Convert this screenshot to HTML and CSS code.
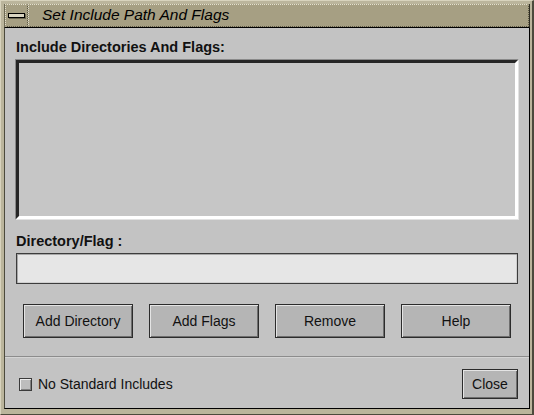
FILE: index.html
```html
<!DOCTYPE html>
<html>
<head>
<meta charset="utf-8">
<link rel="stylesheet" href="styles.css">
</head>
<body>
<div class="frame">
  <div class="titlebar">
    <div class="menu-btn"><span class="menu-bar"></span></div>
    <div class="title">Set Include Path And Flags</div>
  </div>
  <div class="content">
    <div class="label label-first">Include Directories And Flags:</div>
    <div class="listbox"><div class="listbox-inner"></div></div>
    <div class="label label-second">Directory/Flag :</div>
    <div class="textfield"></div>
    <div class="buttons">
      <div class="btn">Add Directory</div>
      <div class="btn">Add Flags</div>
      <div class="btn">Remove</div>
      <div class="btn">Help</div>
    </div>
    <div class="separator"></div>
    <div class="bottom">
      <div class="check">
        <span class="box"></span>
        <span class="check-label">No Standard Includes</span>
      </div>
      <div class="btn btn-close">Close</div>
    </div>
  </div>
</div>
</body>
</html>
```
FILE: styles.css
```css
html, body {
  margin: 0;
  padding: 0;
  background: #c3c3c3;
}
.frame {
  width: 534px;
  height: 415px;
  box-sizing: border-box;
  background: #bbb59c;
  border-top: 1px solid #d8d3bd;
  border-left: 1px solid #d8d3bd;
  border-right: 2px solid #4c4a3c;
  border-bottom: 1px solid #4c4a3c;
  padding: 3px 2px 5px 3px;
  display: flex;
  flex-direction: column;
  font-family: "Liberation Sans", Arial, sans-serif;
  color: #000;
}
.titlebar {
  height: 23px;
  display: flex;
  border-left: 1px solid #6e6a55;
  border-right: 1px solid #2e2c22;
  border-bottom: 1px solid #000;
  background: #a69f83;
}
.menu-btn {
  width: 23px;
  height: 23px;
  box-sizing: border-box;
  border-top: 1px dotted #e4e0cf;
  border-left: 1px dotted #e4e0cf;
  border-bottom: 1px dotted #5c5844;
  border-right: 1px dotted #5c5844;
  display: flex;
  align-items: center;
  justify-content: center;
}
.menu-bar {
  width: 15px;
  height: 3px;
  border: 1px solid #000;
  background: #d9d4c0;
  box-shadow: 1px 1px 0 #6d6853;
}
.title {
  flex: 1;
  box-sizing: border-box;
  height: 23px;
  border-top: 1px dotted #e4e0cf;
  border-left: 1px dotted #e4e0cf;
  border-bottom: 1px dotted #5c5844;
  border-right: 1px dotted #5c5844;
  font-style: italic;
  font-size: 15.5px;
  line-height: 20px;
  padding-left: 13px;
  color: #000;
}
.content {
  flex: 1;
  background: #c3c3c3;
  border-left: 1px solid #4c4a3c;
  border-right: 1px solid #000;
  border-bottom: 1px solid #000;
  display: flex;
  flex-direction: column;
  padding-left: 10px;
  padding-right: 10px;
}
.label {
  font-weight: bold;
  font-size: 14.5px;
  line-height: 17px;
  color: #111;
}
.label-first {
  margin-top: 11px;
  margin-left: 1px;
}
.listbox {
  margin-top: 3px;
  height: 161px;
  width: 504px;
  box-sizing: border-box;
  border-top: 1px solid #8a8a8a;
  border-left: 1px solid #8a8a8a;
  border-right: 1px solid #e2e2e2;
  border-bottom: 1px solid #e2e2e2;
}
.listbox-inner {
  height: 100%;
  box-sizing: border-box;
  background: #c6c6c6;
  border-top: 3px solid #262626;
  border-left: 3px solid #262626;
  border-right: 3px solid #ffffff;
  border-bottom: 3px solid #ffffff;
}
.label-second {
  margin-top: 13px;
  margin-left: 1px;
}
.textfield {
  margin-top: 3px;
  margin-left: 1px;
  width: 502px;
  height: 31px;
  box-sizing: border-box;
  background: #e6e6e6;
  border: 1px solid #3c3c3c;
  box-shadow: inset 1px 1px 0 #a8a8a8, inset -1px -1px 0 #cfcfcf;
}
.buttons {
  margin-top: 20px;
  margin-left: 8px;
  display: flex;
  gap: 16px;
}
.btn {
  width: 110px;
  height: 34px;
  box-sizing: border-box;
  background: #b5b5b5;
  border: 1px solid #2c2c2c;
  box-shadow: inset 1px 1px 0 #e4e4e4, inset -1px -1px 0 #6e6e6e;
  display: flex;
  align-items: center;
  justify-content: center;
  font-size: 14px;
  color: #111;
}
.separator {
  margin-top: 18px;
  margin-left: -10px;
  margin-right: -10px;
  height: 1px;
  background: #8c8c8c;
  border-bottom: 1px solid #d4d4d4;
}
.bottom {
  margin-top: 11px;
  display: flex;
  justify-content: space-between;
  align-items: center;
}
.check {
  display: flex;
  align-items: center;
  margin-left: 4px;
  gap: 6px;
}
.box {
  width: 13px;
  height: 13px;
  box-sizing: border-box;
  background: #bdbdbd;
  border: 1px solid #3a3a3a;
  box-shadow: inset 1px 1px 0 #ececec, inset -1px -1px 0 #808080;
}
.check-label {
  font-size: 14px;
  color: #111;
}
.btn-close {
  width: 56px;
  height: 30px;
  margin-right: 1px;
}
```
